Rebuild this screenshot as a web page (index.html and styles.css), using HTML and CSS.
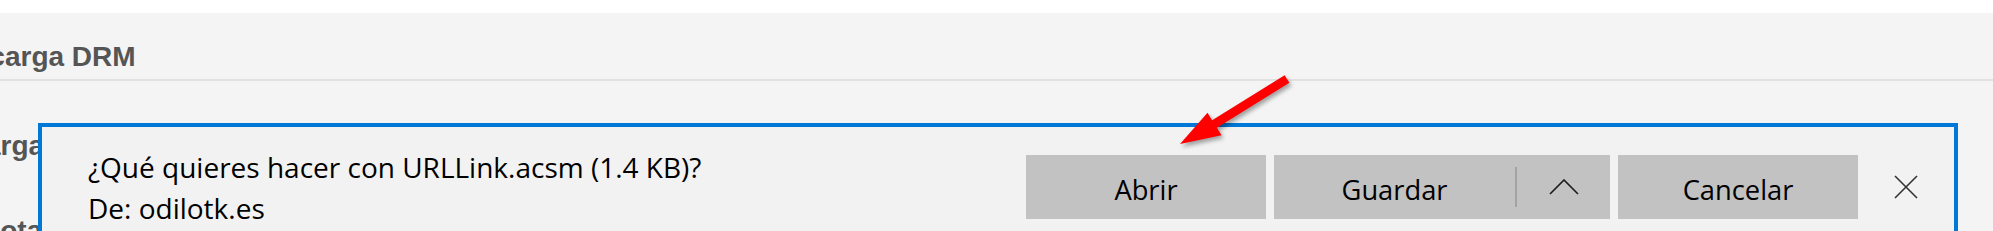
FILE: index.html
```html
<!DOCTYPE html>
<html lang="es">
<head>
<meta charset="utf-8">
<title>Descarga DRM</title>
<link rel="stylesheet" href="styles.css">
</head>
<body>
<div class="page">
  <div class="topband"></div>
  <div class="header"><span class="heading">Descarga DRM</span></div>
  <div class="row row-one"><span class="label label-one">Descarga</span></div>
  <div class="row row-two"><span class="label label-two">Nota</span></div>

  <div class="dialog">
    <div class="dialog-inner">
      <div class="message">
        <div class="line">¿Qué quieres hacer con URLLink.acsm (1.4 KB)?</div>
        <div class="line">De: odilotk.es</div>
      </div>
      <div class="actions">
        <button class="btn btn-open">Abrir</button>
        <div class="btn btn-split">
          <span class="split-main">Guardar</span>
          <span class="split-sep"></span>
          <span class="split-more">
            <svg width="30" height="16" viewBox="0 0 30 16"><polyline points="1,15 15,1 29,15" fill="none" stroke="#1a1a1a" stroke-width="1.6"/></svg>
          </span>
        </div>
        <button class="btn btn-cancel">Cancelar</button>
        <span class="close">
          <svg width="24" height="24" viewBox="0 0 24 24"><path d="M1 1 L23 23 M23 1 L1 23" fill="none" stroke="#333" stroke-width="1.6"/></svg>
        </span>
      </div>
    </div>
  </div>

  <svg class="arrow" width="130" height="90" viewBox="0 0 130 90">
    <polygon points="114.6,10.2 119.4,17.8 46.9,62.8 51.5,70.3 10,79 37.5,47.7 42.1,55.2" fill="#ff0000"/>
  </svg>
</div>
</body>
</html>
```
FILE: styles.css
```css
html, body {
  margin: 0;
  padding: 0;
}
body {
  background: #f4f4f4;
  width: 1993px;
  height: 231px;
  overflow: hidden;
}
.page {
  position: relative;
  width: 1993px;
  height: 231px;
  overflow: hidden;
}
.topband {
  height: 13px;
  background: #ffffff;
}
.header {
  box-sizing: border-box;
  height: 68px;
  padding-top: 30px;
  border-bottom: 2px solid #e1e1e1;
}
.heading, .label {
  display: block;
  font-family: "Liberation Sans", Arial, sans-serif;
  font-weight: bold;
  font-size: 28px;
  line-height: 28px;
  color: #555555;
  white-space: nowrap;
}
.heading {
  margin-left: -62px;
}
.row-one {
  margin-top: 51px;
}
.label-one {
  margin-left: -82px;
}
.row-two {
  margin-top: 57px;
}
.label-two {
  margin-left: -20px;
}
.dialog {
  position: absolute;
  left: 38px;
  top: 123px;
  width: 1920px;
  height: 140px;
  box-sizing: border-box;
  border: 4px solid #0078d7;
  border-bottom: none;
  background: #f2f2f2;
}
.dialog-inner {
  display: flex;
  align-items: flex-start;
  padding-top: 28px;
  padding-left: 46px;
}
.message {
  flex: 1;
  margin-top: -8px;
  font-family: "Open Sans", sans-serif;
  font-size: 28px;
  line-height: 41px;
  color: #000000;
  white-space: nowrap;
}
.actions {
  display: flex;
  align-items: center;
  gap: 8px;
  margin-right: 8px;
}
.btn {
  box-sizing: border-box;
  height: 64px;
  border: none;
  margin: 0;
  padding: 5px 0 0 0;
  background: #c2c2c2;
  font-family: "Open Sans", sans-serif;
  font-size: 27.3px;
  color: #000000;
  display: flex;
  align-items: center;
  justify-content: center;
}
.btn-open, .btn-cancel {
  width: 240px;
}
.btn-split {
  width: 336px;
  padding: 0;
  justify-content: flex-start;
}
.split-main {
  width: 241px;
  padding-top: 5px;
  text-align: center;
}
.split-sep {
  width: 2px;
  height: 40px;
  background: #a3a3a3;
}
.split-more {
  flex: 1;
  display: flex;
  justify-content: center;
  align-items: center;
}
.close {
  width: 80px;
  height: 64px;
  display: flex;
  align-items: center;
  justify-content: center;
}
.arrow {
  position: absolute;
  left: 1170px;
  top: 65px;
  filter: drop-shadow(2px 3px 2px rgba(0, 0, 0, 0.35));
}
```
